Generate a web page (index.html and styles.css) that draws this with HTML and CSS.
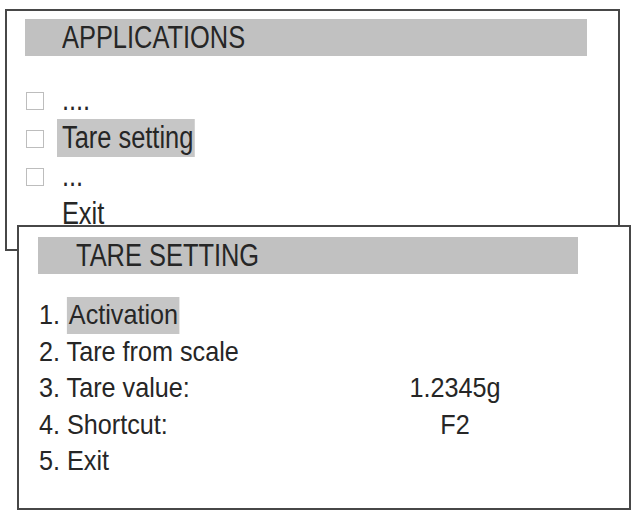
FILE: index.html
```html
<!DOCTYPE html>
<html lang="en">
<head>
<meta charset="utf-8">
<title>Applications – Tare setting</title>
<link rel="stylesheet" href="styles.css">
</head>
<body>
<div class="desk">
  <section class="win win-apps">
    <div class="title"><span class="txt">APPLICATIONS</span></div>
    <ul class="menu">
      <li><span class="box"></span><span class="label">....</span></li>
      <li><span class="box"></span><span class="label sel">Tare setting</span></li>
      <li><span class="box"></span><span class="label">...</span></li>
      <li><span class="box blank"></span><span class="label">Exit</span></li>
    </ul>
  </section>
  <section class="win win-tare">
    <div class="title"><span class="txt">TARE SETTING</span></div>
    <div class="opts">
      <div class="opt"><span class="name">1. <span class="mark">Activation</span></span><span class="val"></span></div>
      <div class="opt"><span class="name">2. Tare from scale</span><span class="val"></span></div>
      <div class="opt"><span class="name">3. Tare value:</span><span class="val">1.2345g</span></div>
      <div class="opt"><span class="name">4. Shortcut:</span><span class="val">F2</span></div>
      <div class="opt"><span class="name">5. Exit</span><span class="val"></span></div>
    </div>
  </section>
</div>
</body>
</html>
```

FILE: styles.css
```css
html, body {
  margin: 0;
  padding: 0;
  background: #ffffff;
}

body {
  color: #262626;
  font-family: "Liberation Sans", Arial, sans-serif;
}

.desk {
  width: 634px;
  height: 515px;
  padding-top: 9px;
  box-sizing: border-box;
}

.win {
  box-sizing: border-box;
  border: 2px solid #474747;
  background: #ffffff;
}

.win-apps {
  width: 615px;
  height: 242px;
  margin-left: 5px;
  padding: 8px 0 0 18px;
}

.win-tare {
  position: relative;
  z-index: 1;
  width: 614px;
  height: 285px;
  margin: -26px 0 0 17px;
  padding: 10px 0 0 19px;
}

.title {
  box-sizing: border-box;
  height: 37px;
  background: #c1c1c1;
  font-size: 31px;
  line-height: 37px;
  padding-left: 37px;
  white-space: nowrap;
  overflow: hidden;
}

.title .txt {
  display: inline-block;
  transform: scaleX(0.82);
  transform-origin: left center;
}

.win-apps .title {
  width: 562px;
}

.win-tare .title {
  width: 540px;
  padding-left: 38px;
}

.menu {
  list-style: none;
  margin: 25px 0 0 1px;
  padding: 0;
  font-size: 31px;
  line-height: 38px;
}

.menu li {
  white-space: nowrap;
}

.box {
  display: inline-block;
  box-sizing: border-box;
  width: 18px;
  height: 18px;
  border: 1.5px solid #bdbdbd;
  margin-right: 13px;
  vertical-align: baseline;
}

.box.blank {
  visibility: hidden;
}

.label {
  display: inline-block;
  padding: 0 2px 0 6px;
  transform: scaleX(0.82);
  transform-origin: left center;
}

.sel {
  background: #c6c6c6;
}

.opts {
  margin-top: 23px;
  padding-left: 1px;
  font-size: 28px;
  line-height: 36.5px;
}

.opt {
  display: grid;
  grid-template-columns: 356px 120px;
  white-space: nowrap;
}

.name {
  transform: scaleX(0.9);
  transform-origin: left center;
}

.mark {
  display: inline-block;
  background: #c6c6c6;
  padding: 0 1px 0 2px;
}

.val {
  text-align: center;
  transform: scaleX(0.9);
  transform-origin: center center;
}
```
